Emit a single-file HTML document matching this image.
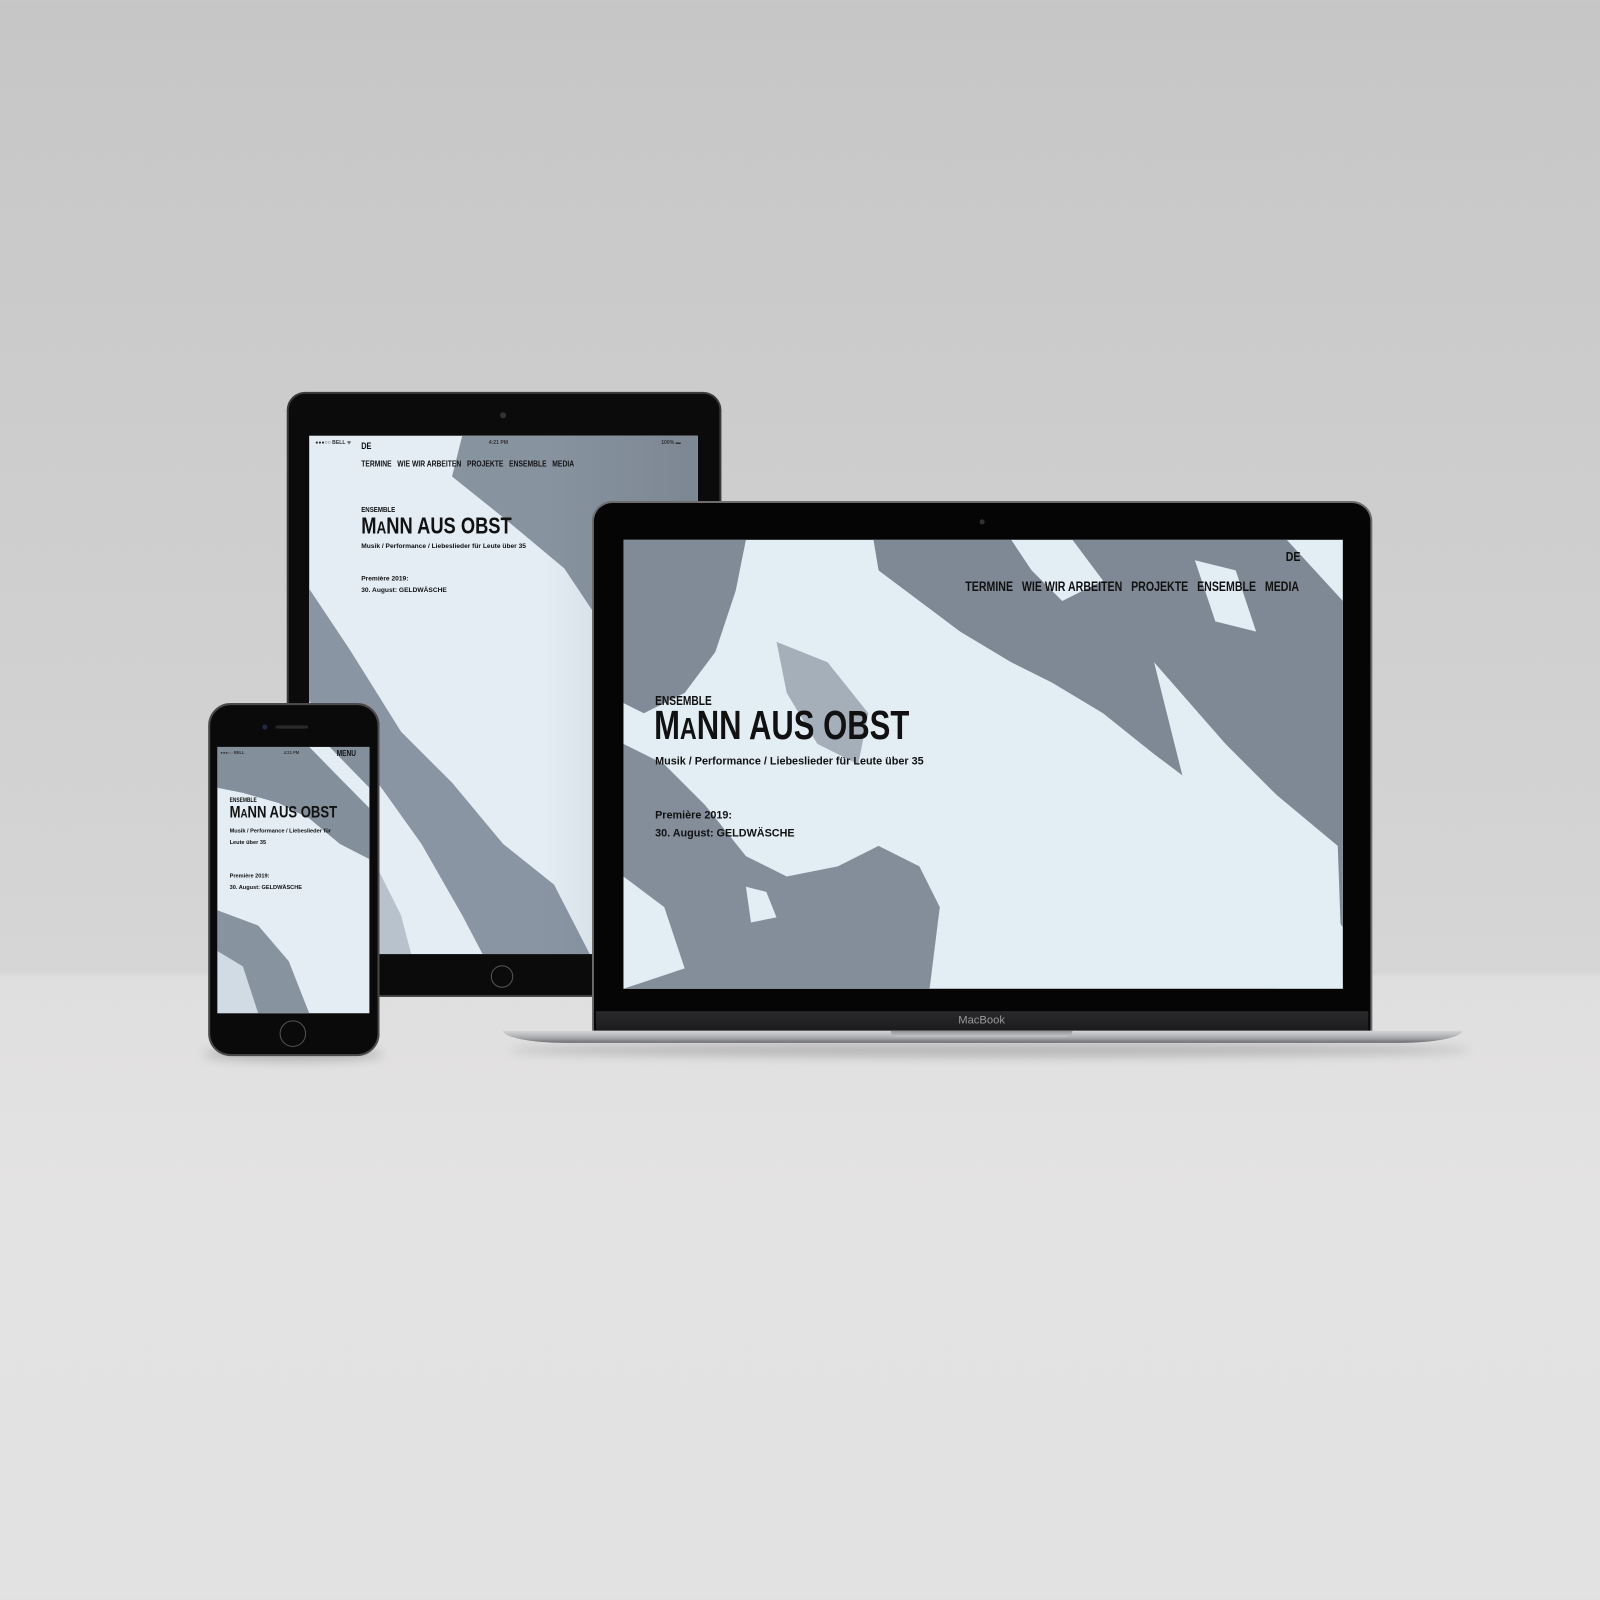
<!DOCTYPE html>
<html><head><meta charset="utf-8"><style>
*{margin:0;padding:0;box-sizing:border-box}
body{width:1600px;height:1600px;position:relative;overflow:hidden;font-family:"Liberation Sans",sans-serif;
background:linear-gradient(180deg,#c6c6c6 0%,#d0d0d0 40%,#d6d6d6 60.8%,#e0dfdf 61.1%,#e4e3e3 75%,#e2e2e2 100%)}
#w{position:absolute;left:0;top:0;width:1568px;height:1568px;transform:scale(1.0204);transform-origin:0 0}
.abs{position:absolute}
.cond{font-weight:bold;color:#111;white-space:nowrap;transform-origin:0 0}
.t{color:#111;font-weight:bold;white-space:nowrap}
</style></head><body><div id="w">
<div class="abs" style="left:500px;top:1022px;width:940px;height:14px;border-radius:50%;background:rgba(0,0,0,.18);filter:blur(5px)"></div>
<div class="abs" style="left:200px;top:1026px;width:175px;height:14px;border-radius:50%;background:rgba(0,0,0,.2);filter:blur(5px)"></div>

<!-- iPad -->
<div class="abs" style="left:281px;top:384px;width:426px;height:593px;background:#0b0b0b;border-radius:18px;border:2px solid #3a3a3a"></div>
<div class="abs" style="left:490px;top:404px;width:6px;height:6px;border-radius:50%;background:#333"></div>
<div class="abs" style="left:481px;top:946px;width:22px;height:22px;border-radius:50%;border:1.5px solid #555"></div>
<div class="abs" style="left:303px;top:427px;width:381px;height:508px;overflow:hidden;background:#e4edf4">
<svg width="381" height="508" style="position:absolute;left:0;top:0">
<polygon fill="#8893a0" points="150,0 381,0 381,200 330,215 290,190 250,130 190,80 140,40"/>
<polygon fill="#8a95a3" points="0,150 40,210 90,290 140,340 190,400 240,440 275,508 0,508"/>
<polygon fill="#e4edf4" points="0,260 60,330 110,400 150,470 170,508 0,508"/>
<polygon fill="#9aa5b2" opacity=".6" points="0,330 50,390 90,470 100,508 0,508"/>
</svg>
<div class="abs" style="left:0;top:0;width:381px;height:508px;background:linear-gradient(90deg,rgba(0,0,0,0) 60%,rgba(90,100,110,.25) 100%)"></div>
<div class="abs t" style="left:6px;top:4px;font-size:5px;color:#333">●●●○○ BELL ᯤ</div>
<div class="abs t" style="left:176px;top:4px;font-size:5px;color:#333">4:21 PM</div>
<div class="abs t" style="left:345px;top:4px;font-size:5px;color:#333">100% ▬</div>
<div class="abs cond" style="left:51px;top:5px;font-size:9px;transform:scaleX(.8)">DE</div>
<div class="abs cond" style="left:51px;top:22px;font-size:8.5px;transform:scaleX(.78)">TERMINE&nbsp;&nbsp; WIE WIR ARBEITEN&nbsp;&nbsp; PROJEKTE&nbsp;&nbsp; ENSEMBLE&nbsp;&nbsp; MEDIA</div>
<div class="abs cond" style="left:51px;top:68px;font-size:7.5px;transform:scaleX(.8)">ENSEMBLE</div>
<div class="abs cond" style="left:51px;top:75px;font-size:23px;transform:scaleX(.78)">M<span style="font-size:17px">A</span>NN AUS OBST</div>
<div class="abs t" style="left:51px;top:105px;font-size:6.5px">Musik / Performance / Liebeslieder für Leute über 35</div>
<div class="abs t" style="left:51px;top:137px;font-size:6.5px">Première 2019:</div>
<div class="abs t" style="left:51px;top:148px;font-size:6.5px">30. August: GELDWÄSCHE</div>
</div>

<!-- Laptop -->
<div class="abs" style="left:580px;top:491px;width:765px;height:522px;background:#050505;border-radius:20px 20px 0 0;border:2px solid #6d6d70;border-bottom:none"></div>
<div class="abs" style="left:960px;top:509px;width:5px;height:5px;border-radius:50%;background:#333"></div>
<div class="abs" style="left:584px;top:991px;width:757px;height:19px;background:linear-gradient(#2a2a2c,#1b1b1d)"></div>
<div class="abs" style="top:994px;left:0;width:1924px;text-align:center;font-size:11px;color:#9a9a9a">MacBook</div>
<div class="abs" style="left:493px;top:1010px;width:940px;height:12px;background:linear-gradient(#d5d6d8,#a7a8ab 60%,#6c6d70);border-radius:0 0 60px 60px/0 0 12px 12px"></div>
<div class="abs" style="left:873px;top:1010px;width:178px;height:6px;background:linear-gradient(#8e8f92,#c4c5c7);border-radius:0 0 6px 6px"></div>
<div class="abs" style="left:611px;top:529px;width:705px;height:440px;overflow:hidden;background:#e3edf4">
<svg width="705" height="440" style="position:absolute;left:0;top:0">
<polygon fill="#818b97" points="0,0 120,0 110,50 90,110 60,150 20,170 0,160"/>
<polygon fill="#7f8995" points="245,0 650,0 705,60 705,380 680,340 640,300 600,270 560,240 520,210 470,170 420,140 380,120 330,90 290,60 250,30"/>
<polygon fill="#e3edf4" points="380,0 440,0 470,40 430,60 400,30"/>
<polygon fill="#e3edf4" points="560,20 600,30 620,90 580,80"/>
<polygon fill="#e3edf4" points="520,120 590,200 640,250 700,300 705,440 640,440 600,360 560,280"/>
<polygon fill="#848e9a" points="0,200 40,220 80,260 120,310 160,330 210,320 250,300 290,320 310,360 300,440 0,440"/>
<polygon fill="#e3edf4" points="120,340 140,345 150,370 125,375"/>
<polygon fill="#8a94a1" opacity=".7" points="150,100 200,120 240,170 230,220 190,200 160,150"/>
<polygon fill="#e3edf4" points="0,330 40,360 60,420 0,440"/>
</svg>
<div class="abs cond" style="left:649px;top:9px;font-size:13px;transform:scaleX(.8)">DE</div>
<div class="abs cond" style="left:335px;top:38px;font-size:13.5px;transform:scaleX(.77)">TERMINE&nbsp;&nbsp; WIE WIR ARBEITEN&nbsp;&nbsp; PROJEKTE&nbsp;&nbsp; ENSEMBLE&nbsp;&nbsp; MEDIA</div>
<div class="abs cond" style="left:31px;top:151px;font-size:12.5px;transform:scaleX(.8)">ENSEMBLE</div>
<div class="abs cond" style="left:30px;top:161px;font-size:40px;line-height:42px;transform:scaleX(.76)">M<span style="font-size:30px">A</span>NN AUS OBST</div>
<div class="abs t" style="left:31px;top:211px;font-size:10.6px">Musik / Performance / Liebeslieder für Leute über 35</div>
<div class="abs t" style="left:31px;top:264px;font-size:10.6px">Première 2019:</div>
<div class="abs t" style="left:31px;top:282px;font-size:10.6px">30. August: GELDWÄSCHE</div>
</div>

<!-- iPhone -->
<div class="abs" style="left:204px;top:689px;width:168px;height:346px;background:#0a0a0a;border-radius:22px;border:2px solid #4a4a4c"></div>
<div class="abs" style="left:270px;top:711px;width:32px;height:3px;border-radius:2px;background:#2a2a2a"></div>
<div class="abs" style="left:257px;top:710px;width:5px;height:5px;border-radius:50%;background:#1f2a44"></div>
<div class="abs" style="left:274px;top:1000px;width:26px;height:26px;border-radius:50%;border:1.5px solid #555"></div>
<div class="abs" style="left:213px;top:732px;width:149px;height:261px;overflow:hidden;background:#e4edf4">
<svg width="149" height="261" style="position:absolute;left:0;top:0">
<polygon fill="#848f9c" points="0,0 149,0 149,110 120,95 90,70 60,55 25,45 0,40"/>
<polygon fill="#e4edf4" points="90,0 110,0 149,40 149,60"/>
<polygon fill="#8893a0" points="0,160 40,175 70,210 90,261 0,261"/>
<polygon fill="#e4edf4" points="0,200 25,215 40,261 0,261" opacity=".8"/>
</svg>
<div class="abs t" style="left:3px;top:3px;font-size:4px;color:#333">●●●○○ BELL</div>
<div class="abs t" style="left:65px;top:3px;font-size:4px;color:#333">4:21 PM</div>
<div class="abs cond" style="left:117px;top:2px;font-size:8px;transform:scaleX(.8)">MENU</div>
<div class="abs cond" style="left:12px;top:50px;font-size:6px;transform:scaleX(.8)">ENSEMBLE</div>
<div class="abs cond" style="left:12px;top:56px;font-size:16px;transform:scaleX(.8)">M<span style="font-size:12px">A</span>NN AUS OBST</div>
<div class="abs t" style="left:12px;top:78px;font-size:5.5px;line-height:11px">Musik / Performance / Liebeslieder für<br>Leute über 35</div>
<div class="abs t" style="left:12px;top:122px;font-size:5.5px;line-height:11px">Première 2019:<br>30. August: GELDWÄSCHE</div>
</div>
</div></body></html>
